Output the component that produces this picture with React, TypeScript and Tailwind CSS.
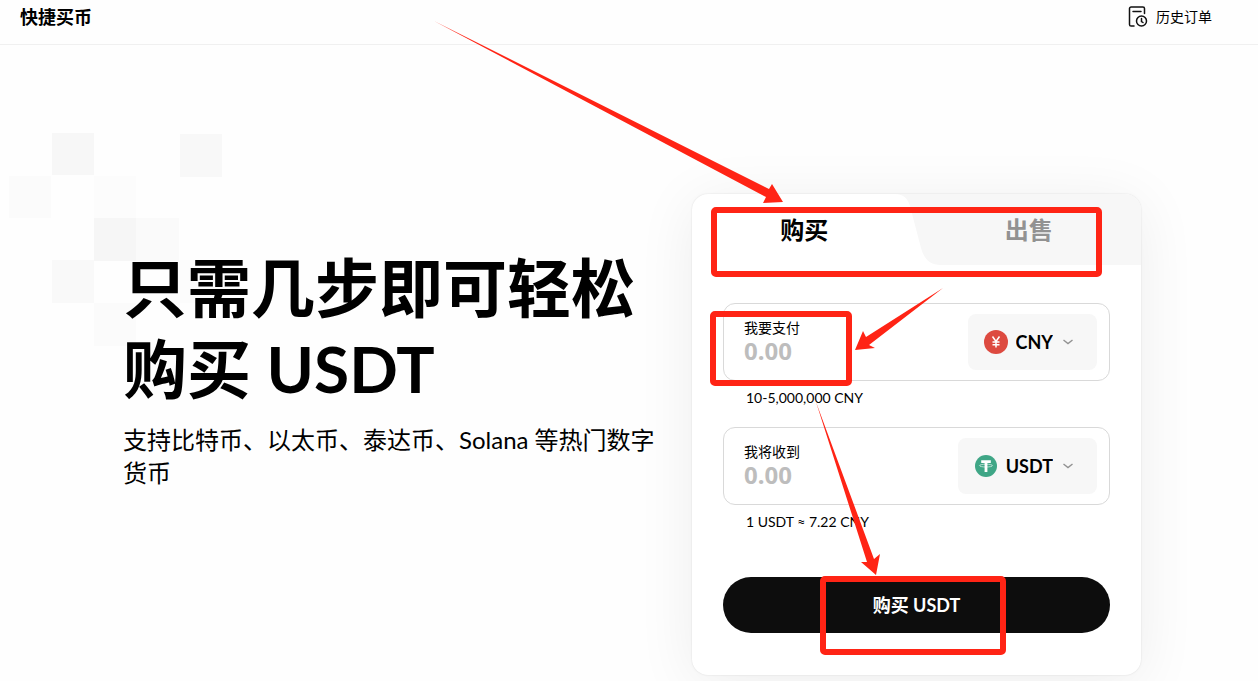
import { useState } from "react";

type Currency = "CNY" | "USDT";

function HistoryIcon() {
  return (
    <svg width="20" height="22" viewBox="0 0 20 22" fill="none" stroke="#111" strokeWidth="1.5" strokeLinecap="round">
      <path d="M16.5 7.500V2.600A1.600 1.600 0 0 0 14.900 1H3.100A1.600 1.600 0 0 0 1.500 2.600V18.400A1.600 1.600 0 0 0 3.100 20H6" />
      <path d="M5 5.500H13" />
      <circle cx="13.500" cy="15" r="5" />
      <path d="M13.500 12.500V15.500L15 16.500" />
    </svg>
  );
}

function CnyIcon() {
  return (
    <svg width="24" height="24" viewBox="0 0 24 24" fill="none">
      <circle cx="12" cy="12" r="12" fill="#dd4a40" />
      <path d="M8.500 6.500L12 11.500L15.500 6.500M12 11.500V17.500M8.500 12H15.500M8.500 14.700H15.500" stroke="#fff" strokeWidth="1.500" />
    </svg>
  );
}

function UsdtIcon() {
  return (
    <svg width="24" height="24" viewBox="0 0 24 24" fill="none">
      <circle cx="12" cy="12" r="11" fill="#3fa686" />
      <path d="M7.200 6.300H16.800V9H13.400V18H10.600V9H7.200Z" fill="#fff" />
      <ellipse cx="12" cy="11.600" rx="6.500" ry="1.400" stroke="#fff" strokeWidth="0.600" />
    </svg>
  );
}

function Chevron() {
  return (
    <svg width="10" height="6" viewBox="0 0 10 6" fill="none" className="pointer-events-none">
      <path d="M0.500 1L5 4.500L9.500 1" stroke="#929292" strokeWidth="1.400" />
    </svg>
  );
}

interface AmountFieldProps {
  id: string;
  label: string;
  currency: Currency;
  hint: string;
}

function AmountField({ id, label, currency, hint }: AmountFieldProps) {
  const [amount, setAmount] = useState("");

  return (
    <div>
      <div className="flex items-center rounded-xl border border-[#d9d9d9] py-[10px] pl-5 pr-3">
        <div className="flex min-w-0 flex-1 flex-col">
          <label htmlFor={id} className="text-sm leading-[18px]">{label}</label>
          <input
            id={id}
            className="w-full font-['Noto_Sans'] text-2xl font-bold leading-7 outline-none placeholder:text-[#bdbdbd]"
            value={amount}
            onChange={(event) => setAmount(event.target.value)}
            placeholder="0.00"
            inputMode="decimal"
          />
        </div>
        <div className="flex h-14 items-center rounded-lg bg-[#f7f7f7] pl-4 pr-6">
          {currency === "CNY" ? <CnyIcon /> : <UsdtIcon />}
          <select aria-label={currency} defaultValue={currency} className="ml-2 mr-[10px] field-sizing-content appearance-none text-lg font-bold outline-none">
            <option>{currency}</option>
          </select>
          <Chevron />
        </div>
      </div>
      <p className="pl-[23px] pt-[7px] text-sm leading-5">{hint}</p>
    </div>
  );
}

function PixelSquares() {
  return (
    <svg className="pointer-events-none absolute left-[9px] top-[133px] -z-10" width="214" height="213" viewBox="9 133 214 213">
      <path d="M52 133h42v42h-42z" fill="#f7f7f7" />
      <path d="M180 134h42v43h-42z" fill="#f8f8f8" />
      <path d="M9 176h42v42h-42z" fill="#fbfbfb" />
      <path d="M94 176h42v42h-42z" fill="#fcfcfc" />
      <path d="M94 218h42v43h-42z" fill="#f6f6f6" />
      <path d="M136 218h43v43h-43z" fill="#fafafa" />
      <path d="M52 260h42v43h-42z" fill="#f9f9f9" />
      <path d="M180 260h42v43h-42z" fill="#fcfcfc" />
      <path d="M94 303h42v43h-42z" fill="#fbfbfb" />
    </svg>
  );
}

// Red boxes and arrows that walk the reader through the steps
function GuideMarks() {
  return (
    <svg className="pointer-events-none absolute left-0 top-0" width="1258" height="681" viewBox="0 0 1258 681" fill="none">
      <g stroke="#ff2415" strokeWidth="6">
        <rect x="714" y="210" width="385" height="64" rx="2" />
        <rect x="713" y="314" width="136" height="69" rx="2" />
        <rect x="823" y="579" width="180" height="73" rx="2" />
      </g>
      <g fill="#ff2415">
        <path d="M434 21L769 189L772 184L783 202L763 203L766 197Z" />
        <path d="M943 288L869 345L875 348L855 350L863 331L866 337Z" />
        <path d="M816 402L874 559L880 554L876 575L861 562L867 562Z" />
      </g>
    </svg>
  );
}

export default function App() {
  const [mode, setMode] = useState<"buy" | "sell">("buy");

  return (
    <div className="relative isolate min-h-screen overflow-hidden bg-[#fefefe] font-[Lato,'Noto_Sans_CJK_SC',sans-serif] text-black">
      <PixelSquares />
      <header className="flex h-[45px] items-center justify-between border-b border-[#f0f0f0] pb-[10px] pl-5 pr-[46px]">
        <h2 className="text-lg font-bold">快捷买币</h2>
        <a href="#history" className="flex items-center gap-2 text-sm">
          <HistoryIcon />
          历史订单
        </a>
      </header>
      <main className="flex items-start gap-5 pb-[6px] pl-[123px] pr-[117px] pt-[149px]">
        <section className="flex-1 pt-[53px]">
          <h1 className="text-[64px] font-bold leading-[81px]">只需几步即可轻松购买 USDT</h1>
          <p className="mt-[14px] text-2xl leading-[33px]">支持比特币、以太币、泰达币、Solana 等热门数字货币</p>
        </section>
        <section className="w-[449px] overflow-hidden rounded-2xl bg-white shadow-[0_0_2px_rgba(0,0,0,0.12),0_8px_60px_rgba(0,0,0,0.07)]">
          <div role="tablist" className="relative isolate grid h-[71px] grid-cols-2 text-2xl font-bold">
            <svg className="absolute right-0 top-0 -z-10" width="246" height="71" viewBox="0 0 246 71">
              <path d="M0 0C9 0 13 5 15 12L26 54C29 65 35 71 46 71H246V0Z" fill="#f7f7f7" />
            </svg>
            <button type="button" role="tab" aria-selected={mode === "buy"} onClick={() => setMode("buy")}>
              购买
            </button>
            <button type="button" role="tab" aria-selected={mode === "sell"} onClick={() => setMode("sell")} className="text-[#929292]">
              出售
            </button>
          </div>
          <form className="px-[31px] pb-[42px] pt-[38px]" onSubmit={(event) => event.preventDefault()}>
            <div className="flex flex-col gap-[19px]">
              <AmountField id="pay" label="我要支付" currency="CNY" hint="10-5,000,000 CNY" />
              <AmountField id="receive" label="我将收到" currency="USDT" hint="1 USDT ≈ 7.22 CNY" />
            </div>
            <button type="submit" className="mt-[45px] h-14 w-full rounded-full bg-[#0d0d0d] text-lg font-bold text-white">
              购买 USDT
            </button>
          </form>
        </section>
      </main>
      <GuideMarks />
    </div>
  );
}
